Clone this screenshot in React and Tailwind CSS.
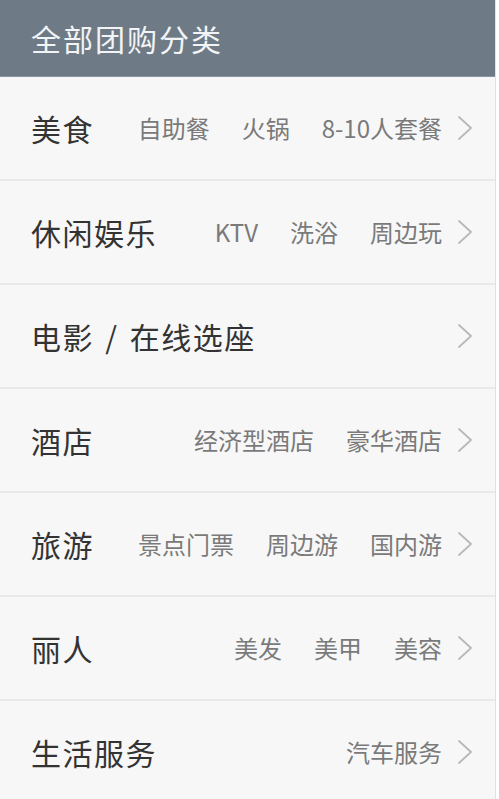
const categories = [
  { title: "美食", subs: ["自助餐", "火锅", "8-10人套餐"] },
  { title: "休闲娱乐", subs: ["KTV", "洗浴", "周边玩"] },
  { title: "电影 / 在线选座", subs: [] },
  { title: "酒店", subs: ["经济型酒店", "豪华酒店"] },
  { title: "旅游", subs: ["景点门票", "周边游", "国内游"] },
  { title: "丽人", subs: ["美发", "美甲", "美容"] },
  { title: "生活服务", subs: ["汽车服务"] },
];

function Chevron() {
  return (
    <svg width="16" height="26" viewBox="0 0 16 26" fill="none" className="shrink-0">
      <path d="M2 2l12 11L2 24" stroke="#b8b8b8" strokeWidth="1.8" strokeLinecap="round" strokeLinejoin="round" />
    </svg>
  );
}

function Row({ cat }) {
  return (
    <div className="flex h-[104px] items-center border-b-2 border-[#e9e9e9] pl-[31px] pr-[22px]">
      <span className="text-[30px] leading-none text-[#333] tracking-[1.5px] [word-spacing:3px]">
        {cat.title}
      </span>
      <div className="ml-auto flex items-center gap-[32px] pr-[15px]">
        {cat.subs.map((s) => (
          <span key={s} className="text-[24px] leading-none text-[#7a7a7a]">
            {s}
          </span>
        ))}
      </div>
      <Chevron />
    </div>
  );
}

export default function App() {
  return (
    <div
      className="h-[799px] w-[499px] overflow-hidden bg-white"
      style={{ fontFamily: '"Noto Sans CJK SC", "Noto Sans", sans-serif' }}
    >
      <div className="h-full w-[496px] border-r border-[#e2e2e2] bg-[#f7f7f7]">
        <div className="flex h-[77px] items-center border-b border-[#8b96a0] bg-[#6e7b87] pl-[31px]">
          <span className="text-[30px] leading-none text-[#f3f4f5] tracking-[2px]">全部团购分类</span>
        </div>
        {categories.map((c) => (
          <Row key={c.title} cat={c} />
        ))}
      </div>
    </div>
  );
}
